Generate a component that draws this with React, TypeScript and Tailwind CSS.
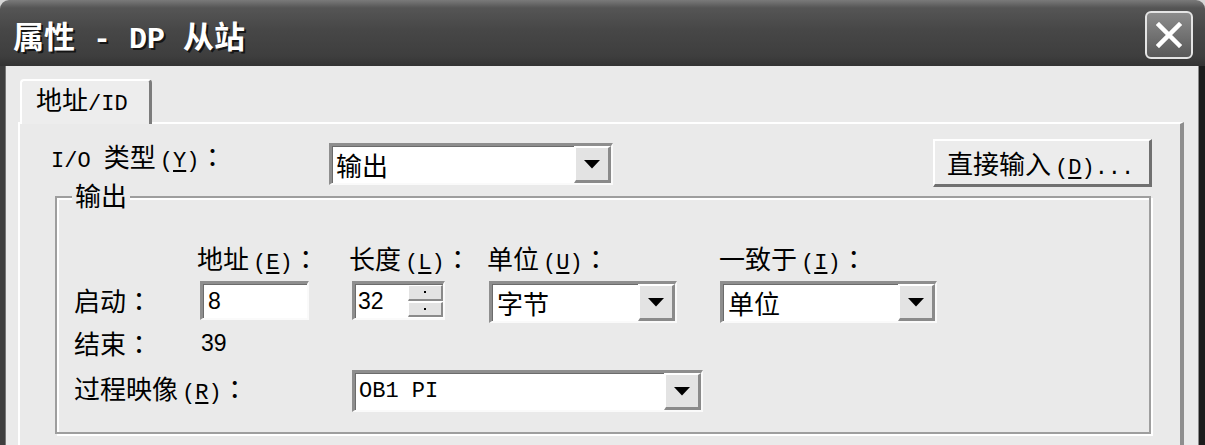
import React from "react";

const CJK = "font-['Noto_Sans_CJK_SC','Liberation_Sans',sans-serif]";
const MONO = "font-['Liberation_Mono','Noto_Sans_CJK_SC',monospace]";
const SANS = "font-['Liberation_Sans','Noto_Sans_CJK_SC',sans-serif]";

function Mn({ k }: { k: string }) {
  return (
    <span className={`${MONO} text-[22px] whitespace-pre ml-[4px]`}>
      (<span className="underline underline-offset-[3px] decoration-[2px]">{k}</span>)
    </span>
  );
}

function Colon() {
  return <span className="font-['Noto_Sans_CJK_JP','Noto_Sans_CJK_SC',sans-serif]">：</span>;
}

function Arrow() {
  return (
    <svg width="16" height="9" viewBox="0 0 16 9">
      <polygon points="0,0 16,0 8,8.5" fill="#000" />
    </svg>
  );
}

function DropBtn() {
  return (
    <div className="w-[37px] h-full shrink-0 bg-[#e3e3e3] border-t-2 border-l-2 border-t-white border-l-white border-b-[3px] border-r-[3px] border-b-[#8a8a8a] border-r-[#8a8a8a] flex items-center justify-center">
      <Arrow />
    </div>
  );
}

const SUNKEN =
  "bg-white border-t-[3px] border-l-[3px] border-t-[#8e8e8e] border-l-[#8e8e8e] border-b-2 border-r-2 border-b-[#fafafa] border-r-[#fafafa] shadow-[inset_1px_1px_0_#6c6c6c]";

function Combo({ cls, children }: { cls: string; children: React.ReactNode }) {
  return (
    <div className={`${SUNKEN} ${cls} h-[42px] shrink-0 flex items-stretch`}>
      <div className="flex-1 flex items-center pl-[4px] text-[26px] leading-[28px] text-black whitespace-pre">
        {children}
      </div>
      <DropBtn />
    </div>
  );
}

function Label({ cls, children }: { cls: string; children: React.ReactNode }) {
  return (
    <div className={`${cls} shrink-0 h-[28px] text-[26px] leading-[28px] text-black whitespace-pre`}>
      {children}
    </div>
  );
}

function SpinBtn() {
  return (
    <div className="flex-1 bg-[#e3e3e3] border-t border-l border-t-white border-l-white border-b-2 border-r-2 border-b-[#8a8a8a] border-r-[#8a8a8a] flex items-center justify-center">
      <div className="w-[2px] h-[2px] bg-black" />
    </div>
  );
}

export default function App() {
  return (
    <div className={`${CJK} w-[1205px] h-[445px] overflow-hidden bg-[#d6d6d6] flex flex-col`}>
      {/* Title bar */}
      <div className="h-[66px] shrink-0 rounded-t-[9px] bg-[linear-gradient(180deg,#7a7a7a_0%,#555555_12%,#474747_45%,#3e3e3e_85%,#333333_100%)] flex items-start pl-[13px] pr-[12px]">
        <div className="mt-[15px] h-[40px] leading-[40px] text-white font-bold whitespace-pre [text-shadow:2px_2px_0_#151515]">
          <span className="text-[31px]">属性</span>
          <span className={`${MONO} text-[30px]`}> - DP </span>
          <span className="text-[31px]">从站</span>
        </div>
        <div className="flex-1" />
        <div className="mt-[11px] w-[48px] h-[48px] rounded-[6px] border-2 border-[#e4e4e4] bg-[linear-gradient(180deg,#8c8c8c,#595959)] flex items-center justify-center">
          <svg width="26" height="26" viewBox="0 0 26 26">
            <path d="M3 3 L23 23 M23 3 L3 23" stroke="#ffffff" strokeWidth="4.5" strokeLinecap="square" />
          </svg>
        </div>
      </div>

      {/* Body with frame */}
      <div className="flex-1 flex min-h-0">
        <div className="w-[6px] shrink-0 bg-[#3e3e3e] border-r border-r-[#777777]" />
        <div className="flex-1 bg-[#eaeaea] pl-[12px] pr-[14px] pt-[13px] flex flex-col min-h-0">
          {/* Tab strip */}
          <div className="flex">
            <div className="ml-[2px] relative z-10 -mb-[2px] w-[132px] h-[45px] bg-[#ededed] rounded-t-[4px] border-t-2 border-l-2 border-t-white border-l-white border-r-[3px] border-r-[#7c7c7c] pl-[14px] pt-[4px]">
              <div className="h-[28px] text-[26px] leading-[28px] text-black whitespace-pre">
                地址<span className={`${MONO} text-[22px]`}>/ID</span>
              </div>
            </div>
          </div>

          {/* Tab panel */}
          <div className="flex-1 border-t-2 border-l-2 border-t-white border-l-white border-r-[4px] border-r-[#8e8e8e] flex flex-col">
            {/* Row 1 */}
            <div className="flex items-start">
              <Label cls="ml-[31px] mt-[18px] w-[278px]">
                <span className={`${MONO} text-[22px]`}>I/O </span>类型<Mn k="Y" />
                <Colon />
              </Label>
              <Combo cls="mt-[19px] w-[284px]">输出</Combo>
              <div className="ml-[320px] mt-[15px] w-[219px] h-[48px] shrink-0 bg-[#ececec] border-t-2 border-l-2 border-t-white border-l-white border-b-[3px] border-r-[3px] border-b-[#707070] border-r-[#707070] flex items-center pl-[12px]">
                <div className="h-[28px] text-[26px] leading-[28px] text-black whitespace-pre">
                  直接输入<Mn k="D" />
                  <span className={`${MONO} text-[22px]`}>...</span>
                </div>
              </div>
            </div>

            {/* Group box */}
            <div className="relative mt-[9px] ml-[35px] w-[1096px] h-[238px] shrink-0 border-2 border-[#9e9e9e] shadow-[2px_2px_0_#ffffff,inset_2px_2px_0_#ffffff] flex flex-col">
              <div className="absolute left-[15px] top-[-17px] h-[28px] leading-[28px] px-[3px] bg-[#eaeaea] text-[26px] text-black">
                输出
              </div>

              {/* Column labels */}
              <div className="flex mt-[46px] h-[28px]">
                <Label cls="ml-[140px] w-[152px]">
                  地址<Mn k="E" />
                  <Colon />
                </Label>
                <Label cls="w-[138px]">
                  长度<Mn k="L" />
                  <Colon />
                </Label>
                <Label cls="w-[232px]">
                  单位<Mn k="U" />
                  <Colon />
                </Label>
                <Label cls="">
                  一致于<Mn k="I" />
                  <Colon />
                </Label>
              </div>

              {/* Start row */}
              <div className="flex items-start mt-[9px]">
                <Label cls="ml-[17px] mt-[5px] w-[126px]">
                  启动<Colon />
                </Label>
                <div className={`${SUNKEN} w-[109px] h-[39px] shrink-0 flex items-center pl-[5px]`}>
                  <span className={`${SANS} text-[23px] leading-[26px] text-black`}>8</span>
                </div>
                <div className={`${SUNKEN} ml-[43px] w-[93px] h-[39px] shrink-0 flex items-stretch`}>
                  <div className="flex-1 flex items-center pl-[3px]">
                    <span className={`${SANS} text-[23px] leading-[26px] text-black`}>32</span>
                  </div>
                  <div className="w-[35px] flex flex-col gap-[1px] py-[1px]">
                    <SpinBtn />
                    <SpinBtn />
                  </div>
                </div>
                <Combo cls="ml-[44px] w-[188px]">
                  <span className="pl-[1px]">字节</span>
                </Combo>
                <Combo cls="ml-[43px] w-[217px]">
                  <span className="pl-[1px]">单位</span>
                </Combo>
              </div>

              {/* End row */}
              <div className="flex items-start mt-[6px]">
                <Label cls="ml-[17px] w-[127px]">
                  结束<Colon />
                </Label>
                <div className={`${SANS} h-[28px] leading-[28px] text-[23px] text-black`}>39</div>
              </div>

              {/* Process image row */}
              <div className="flex items-start mt-[13px]">
                <Label cls="ml-[17px] mt-[4px] w-[278px]">
                  过程映像<Mn k="R" />
                  <Colon />
                </Label>
                <Combo cls="w-[351px]">
                  <span className={`${MONO} text-[22px]`}>OB1 PI</span>
                </Combo>
              </div>
            </div>
          </div>
        </div>
        <div className="w-[7px] shrink-0 bg-[#1c1c1c] border-l border-l-[#8a8a8a]" />
      </div>
    </div>
  );
}
